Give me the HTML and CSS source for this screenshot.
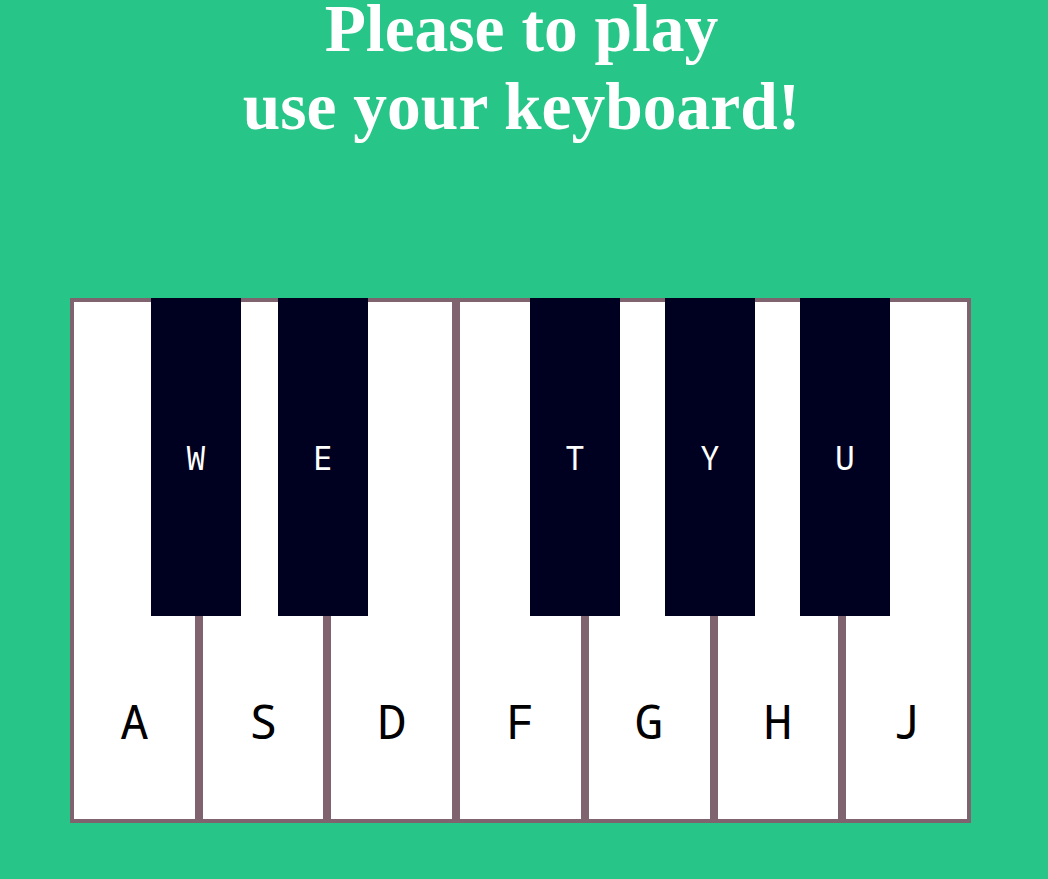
FILE: index.html
```html
<!DOCTYPE html>
<html lang="en">
<head>
<meta charset="utf-8">
<title>Piano</title>
<link rel="stylesheet" href="styles.css">
</head>
<body>
<h1 class="title"><span class="line-1">Please to play</span><span class="line-2">use your keyboard!</span></h1>
<div class="piano">
  <div class="white-key"><span>A</span></div>
  <div class="white-key"><span>S</span></div>
  <div class="white-key"><span>D</span></div>
  <div class="white-key"><span>F</span></div>
  <div class="white-key"><span>G</span></div>
  <div class="white-key"><span>H</span></div>
  <div class="white-key"><span>J</span></div>
  <div class="black-key k1"><span>W</span></div>
  <div class="black-key k2"><span>E</span></div>
  <div class="black-key k3"><span>T</span></div>
  <div class="black-key k4"><span>Y</span></div>
  <div class="black-key k5"><span>U</span></div>
</div>
</body>
</html>
```
FILE: styles.css
```css
html, body {
  margin: 0;
  padding: 0;
}
body {
  background: #27c587;
  width: 1048px;
  height: 879px;
  overflow: hidden;
}
.title {
  width: 1043px;
  margin: 0;
  font-family: "Liberation Serif", "Times New Roman", serif;
  font-weight: bold;
  font-size: 67.5px;
  color: #ffffff;
  text-align: center;
}
.line-1 {
  display: block;
  line-height: 58px;
}
.line-2 {
  display: block;
  line-height: 98px;
}
.piano {
  position: relative;
  display: flex;
  margin: 142px 0 0 70px;
  width: 901px;
  height: 525px;
}
.white-key {
  flex: 1;
  background: #ffffff;
  border: 4px solid #7f636e;
  display: flex;
  align-items: flex-end;
  justify-content: center;
  padding-bottom: 66px;
  font-family: "Noto Sans Mono", "DejaVu Sans Mono", monospace;
  font-size: 48px;
  color: #000000;
}
.black-key {
  position: absolute;
  top: 0;
  width: 90px;
  height: 318px;
  background: #000020;
  display: flex;
  align-items: center;
  justify-content: center;
  font-family: "Noto Sans Mono", "DejaVu Sans Mono", monospace;
  font-size: 33px;
  color: #ffffff;
}
.k1 { left: 81px; }
.k2 { left: 208px; }
.k3 { left: 460px; }
.k4 { left: 595px; }
.k5 { left: 730px; }
```
